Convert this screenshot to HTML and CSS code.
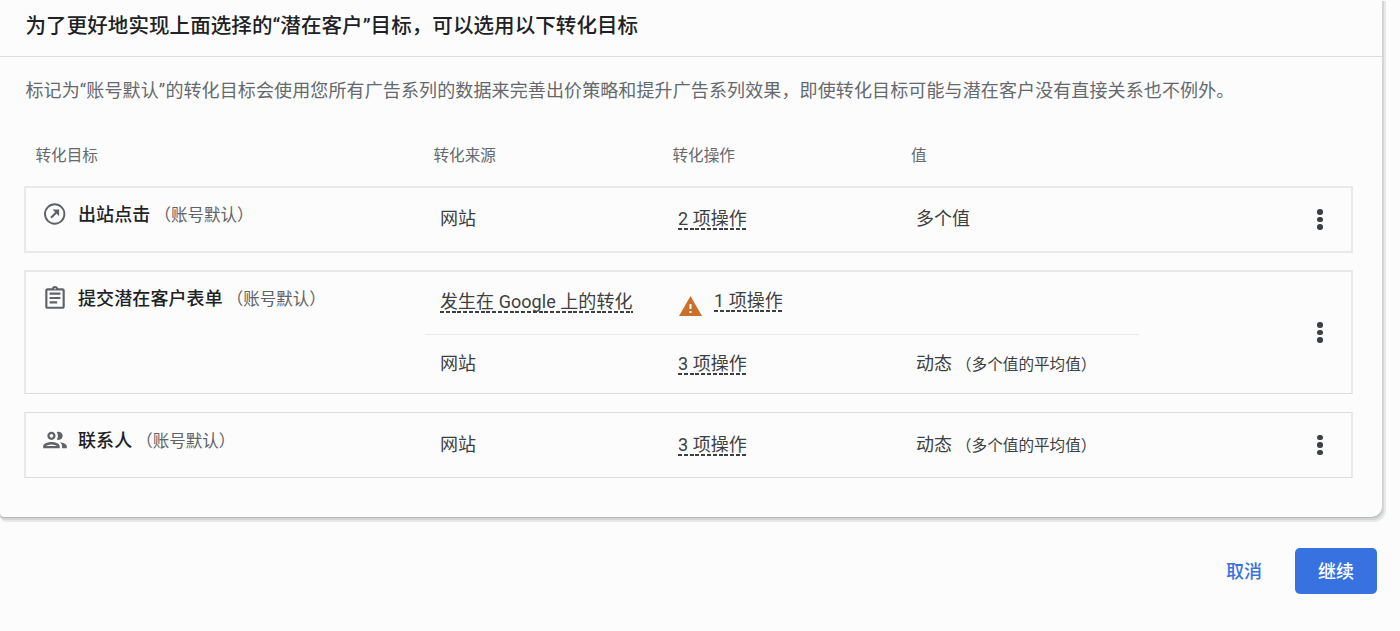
FILE: index.html
```html
<!DOCTYPE html>
<html lang="zh-CN">
<head>
<meta charset="utf-8">
<title>转化目标</title>
<link rel="stylesheet" href="styles.css">
</head>
<body>
<section class="card">
  <h2 class="card-title">为了更好地实现上面选择的“潜在客户”目标，可以选用以下转化目标</h2>
  <div class="card-body">
    <p class="intro">标记为“账号默认”的转化目标会使用您所有广告系列的数据来完善出价策略和提升广告系列效果，即使转化目标可能与潜在客户没有直接关系也不例外。</p>
    <div class="head">
      <span>转化目标</span><span>转化来源</span><span>转化操作</span><span>值</span>
    </div>
    <div class="goals">
      <article class="goal goal-thick">
        <div class="goal-name">
          <svg class="icon" viewBox="0 0 26 26"><circle cx="12.700" cy="13" r="9.700" fill="none" stroke="#5f6368" stroke-width="1.900"/><path d="M9 16.700 15.500 10.200" fill="none" stroke="#5f6368" stroke-width="2.200"/><path d="M10.500 8.600h6.600v6.600z" fill="#5f6368"/></svg>
          <strong>出站点击</strong><span class="default">（账号默认）</span>
        </div>
        <div class="sources">
          <div class="source"><span>网站</span><span><a class="ops">2 项操作</a></span><span>多个值</span></div>
        </div>
        <button class="menu" aria-label="更多"><i></i><i></i><i></i></button>
      </article>
      <article class="goal goal-tall">
        <div class="goal-name">
          <svg class="icon" viewBox="0 0 24 24"><path fill="#5f6368" d="M7 15h7v2H7zm0-4h10v2H7zm0-4h10v2H7zm12-4h-4.180C14.400 1.840 13.300 1 12 1s-2.400.84-2.820 2H5c-1.100 0-2 .9-2 2v15c0 1.100.9 2 2 2h14c1.100 0 2-.9 2-2V5c0-1.100-.9-2-2-2zm-7-.250c.41 0 .75.34.75.75s-.34.75-.75.75-.75-.34-.75-.75.34-.75.75-.75zM19 20H5V5h14v15z"/></svg>
          <strong>提交潜在客户表单</strong><span class="default">（账号默认）</span>
        </div>
        <div class="sources">
          <div class="source"><span><a class="ops">发生在 Google 上的转化</a></span><span class="warned"><svg class="warning" viewBox="0 0 23 20"><path fill="#c9702b" d="M11.500 0 23 20H0z"/><path fill="#fff" d="M10.500 8h2v5h-2zM10.500 15h2v2h-2z"/></svg><a class="ops">1 项操作</a></span><span></span></div>
          <div class="source"><span>网站</span><span><a class="ops">3 项操作</a></span><span>动态<small>（多个值的平均值）</small></span></div>
        </div>
        <button class="menu" aria-label="更多"><i></i><i></i><i></i></button>
      </article>
      <article class="goal goal-thin">
        <div class="goal-name">
          <svg class="icon" viewBox="1 1 22 22"><path fill="#5f6368" d="M9 13.750c-2.340 0-7 1.170-7 3.500V19h14v-1.750c0-2.330-4.660-3.500-7-3.500zM4.340 17c.84-.58 2.870-1.250 4.660-1.250s3.820.67 4.660 1.250H4.340zM9 12c1.930 0 3.500-1.570 3.500-3.500S10.930 5 9 5 5.500 6.570 5.500 8.500 7.070 12 9 12zm0-5c.83 0 1.500.67 1.500 1.500S9.830 10 9 10s-1.500-.67-1.500-1.500S8.170 7 9 7zm7.040 6.810c1.160.84 1.960 1.960 1.960 3.440V19h4v-1.750c0-2.020-3.500-3.170-5.960-3.440zM15 12c1.930 0 3.500-1.570 3.500-3.500S16.930 5 15 5c-.54 0-1.040.13-1.500.35.63.89 1 1.980 1 3.150s-.37 2.260-1 3.150c.46.22.96.35 1.500.35z"/></svg>
          <strong>联系人</strong><span class="default">（账号默认）</span>
        </div>
        <div class="sources">
          <div class="source"><span>网站</span><span><a class="ops">3 项操作</a></span><span>动态<small>（多个值的平均值）</small></span></div>
        </div>
        <button class="menu" aria-label="更多"><i></i><i></i><i></i></button>
      </article>
    </div>
  </div>
</section>
<footer class="actions">
  <button class="btn">取消</button>
  <button class="btn btn-primary">继续</button>
</footer>
</body>
</html>
```
FILE: styles.css
```css
* { box-sizing: border-box; }
body {
  margin: 0;
  height: 631px;
  overflow: hidden;
  background: #fcfcfc;
  color: #3c4043;
  font: 18px/26px Roboto, "Noto Sans CJK SC", sans-serif;
}
.card {
  width: 1382px;
  height: 517px;
  border-radius: 0 0 10px 4px;
  box-shadow: 0 1px 1px #b4b6b8, 1px 2px 0 1px #d4d6d8, 2px 3px 0 2px #e8eaea;
}
.card-title {
  margin: 0;
  height: 57px;
  padding: 12px 25.5px 0;
  border-bottom: 1px solid #dadce0;
  color: #202124;
  font-size: 20.5px;
  font-weight: 500;
  letter-spacing: .08px;
  line-height: 28px;
}
.card-body { padding: 21px 29px 0 24px; }
.intro {
  margin: 0;
  padding-left: 1.5px;
  color: #65696d;
  letter-spacing: .12px;
  white-space: nowrap;
}
.head {
  display: grid;
  grid-template-columns: 398px 239px 238.5px 1fr;
  margin-top: 39px;
  padding-left: 11.5px;
  color: #65696d;
  font-size: 15.6px;
}
.goals { display: grid; gap: 18px; margin-top: 17px; }
.goal {
  display: grid;
  grid-template-columns: 399px 714px 1fr;
  border: 2px solid #e8eaea;
}
.goal-thick { height: 67px; margin-bottom: -1px; }
.goal-tall { height: 124px; border-bottom: 1px solid #dadce0; }
.goal-thin { height: 66px; border-width: 1px 2px; border-top-color: #dadce0; border-bottom-color: #dadce0; }
.goal-name { display: flex; align-items: center; height: 26px; margin-top: 13px; padding-left: 16px; }
.goal-thin .goal-name { margin-top: 14px; }
.icon { width: 26px; height: 26px; margin-right: 10px; }
.goal-name strong { padding-top: 2px; color: #202124; font-weight: 500; letter-spacing: .1px; }
.default { padding: 3px 0 0 4px; color: #5f6368; font-size: 16.5px; }
.sources { display: grid; }
.goal-tall .sources { grid-template-rows: 62px 59px; }
.source { display: grid; grid-template-columns: 238px 238px 1fr; align-items: center; }
.goal-thick .source { padding-bottom: 1px; }
.goal-tall .source:first-child { padding-bottom: 3px; }
.source > span { padding-left: 15px; }
.source + .source { border-top: 1px solid #e8eaea; }
.ops {
  display: inline-block;
  height: 23px;
  line-height: 22px;
  letter-spacing: .05px;
  background: repeating-linear-gradient(90deg, #3c4043 0 4px, transparent 4px 5.8px) 0 20px / 100% 2px no-repeat;
}
.warned { display: flex; align-items: center; }
.warning { width: 23px; height: 20px; margin: 9px 12px 0 1px; }
small { padding-left: 4px; font-size: 15.6px; }
.menu {
  display: grid;
  align-content: center;
  justify-self: end;
  gap: 2px;
  width: 6px;
  margin-right: 28px;
  padding: 0;
  border: 0;
  background: none;
}
.menu i { width: 5.6px; height: 5.6px; border-radius: 50%; background: #3c4043; }
.actions { display: flex; justify-content: flex-end; gap: 16px; padding: 31px 23px 0 0; }
.btn {
  height: 46px;
  padding: 2px 17px 0;
  border: 0;
  border-radius: 5px;
  background: none;
  color: #3871e0;
  font: inherit;
  font-weight: 500;
}
.btn-primary { width: 82px; background: #3871e0; color: #fff; }
```
